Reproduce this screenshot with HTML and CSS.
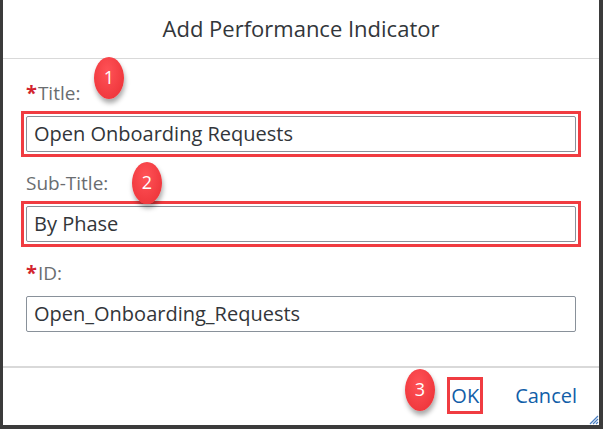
FILE: index.html
```html
<!DOCTYPE html>
<html lang="en">
<head>
<meta charset="utf-8">
<title>Add Performance Indicator</title>
<link rel="stylesheet" href="styles.css">
</head>
<body>
<div class="dialog">
  <header class="header">Add Performance Indicator</header>
  <main class="content">
    <div class="field">
      <label class="label"><span class="req">*</span>Title:</label>
      <div class="mark"><div class="input">Open Onboarding Requests</div></div>
    </div>
    <div class="field">
      <label class="label">Sub-Title:</label>
      <div class="mark"><div class="input">By Phase</div></div>
    </div>
    <div class="field">
      <label class="label"><span class="req">*</span>ID:</label>
      <div class="input">Open_Onboarding_Requests</div>
    </div>
  </main>
  <footer class="footer">
    <span class="btn btn-marked">OK</span>
    <span class="btn">Cancel</span>
  </footer>
  <span class="badge badge-1">1</span>
  <span class="badge badge-2">2</span>
  <span class="badge badge-3">3</span>
  <svg class="grip" width="10" height="10" viewBox="0 0 10 10">
    <path d="M9 1 L1 9 M9 4 L4 9 M9 7 L7 9" stroke="#4a7fc1" stroke-width="1.2"/>
  </svg>
</div>
</body>
</html>
```

FILE: styles.css
```css
* { box-sizing: border-box; }
html, body { margin: 0; padding: 0; background: #ffffff; }
body {
  font-family: "Open Sans", "Noto Sans", sans-serif;
  color: #32363a;
}
.dialog {
  position: relative;
  width: 603px;
  height: 429px;
  display: flex;
  flex-direction: column;
  background: #ffffff;
  border-left: 3px solid #3b3b3b;
  border-right: 4px solid #3b3b3b;
  border-bottom: 4px solid #3b3b3b;
}
.header {
  height: 59px;
  flex: none;
  border-bottom: 1px solid #d9d9d9;
  display: flex;
  align-items: center;
  justify-content: center;
  font-size: 22px;
  color: #32363a;
  padding-bottom: 2px;
}
.content {
  flex: 1;
  padding: 22px 23px 0 23px;
  display: flex;
  flex-direction: column;
  gap: 19px;
}
.field {
  display: flex;
  flex-direction: column;
  gap: 11px;
}
.label {
  height: 24px;
  line-height: 24px;
  font-size: 19px;
  color: #6a6d70;
  padding-left: 0;
}
.req {
  color: #d2232e;
  font-weight: 700;
  font-size: 20px;
  margin-right: 1px;
}
.input {
  height: 36px;
  border: 1px solid #89919a;
  border-radius: 2px;
  background: #ffffff;
  font-size: 20px;
  line-height: 34px;
  padding-left: 7px;
  color: #32363a;
}
.mark {
  margin: -5px -5px;
  padding: 2px;
  border: 3px solid #f03c41;
}
.footer {
  height: 59px;
  flex: none;
  border-top: 2px solid #d9d9d9;
  display: flex;
  align-items: center;
  justify-content: flex-end;
  gap: 32px;
  padding-right: 22px;
  padding-bottom: 2px;
}
.btn {
  font-size: 20px;
  color: #115ea8;
  line-height: 31px;
}
.btn-marked {
  border: 3px solid #f03c41;
  padding: 0 1px;
  height: 37px;
}
.badge {
  position: absolute;
  width: 30px;
  height: 42px;
  border-radius: 50%;
  background: radial-gradient(ellipse at 45% 35%, #ff5257 0%, #f0393e 70%, #e2333a 100%);
  color: #ffffff;
  font-size: 18px;
  line-height: 40px;
  text-align: center;
  box-shadow: 1px 4px 5px rgba(0, 0, 0, 0.35);
}
.badge-1 { left: 91px; top: 57px; }
.badge-2 { left: 129px; top: 162px; }
.badge-3 { left: 402px; top: 369px; }
.grip {
  position: absolute;
  right: 0;
  bottom: 0;
}
```
